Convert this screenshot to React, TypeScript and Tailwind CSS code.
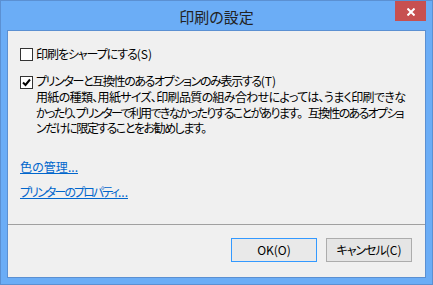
import React from 'react';

const Checkbox: React.FC<{ checked?: boolean }> = ({ checked }) => (
    <span className="w-[13px] h-[13px] shrink-0 border border-[#333333] bg-white flex items-center justify-center">
        {checked && (
            <svg width="9" height="9" viewBox="0 0 9 9">
                <path d="M1 4.5 L3.5 7 L8 1.5" fill="none" stroke="#000" strokeWidth="2" />
            </svg>
        )}
    </span>
);

// japanese is squeezed then spread to the width measured on the reference; latin keeps normal spacing
const just = 'inline-block whitespace-nowrap [text-align-last:justify]';
const fit = `${just} tracking-[-2px]`;
const Lat: React.FC<{ children: React.ReactNode }> = ({ children }) => (
    <span className="tracking-normal">{children}</span>
);

export default function App() {
    return (
        <div className="w-[433px] h-[285px] bg-[#6badf6] border border-[#5b90d2] flex flex-col px-[6px] pb-[6px] font-['Noto_Sans_CJK_JP',sans-serif] [font-feature-settings:'palt']">
            {/* title bar */}
            <div className="h-[29px] relative flex items-center justify-center">
                <span className="text-[15px] leading-[20px] text-[#222222] mt-[2px]">印刷の設定</span>
                <button className="absolute right-0 top-0 w-[31px] h-[20px] bg-[#c75050] flex items-center justify-center">
                    <svg width="8" height="8" viewBox="0 0 8 8" className="mt-[1px] ml-[1px]">
                        <path d="M0.5 0.5 L7.5 7.5 M7.5 0.5 L0.5 7.5" stroke="#fff" strokeWidth="2" />
                    </svg>
                </button>
            </div>

            {/* body */}
            <div className="flex-1 border border-[#5b90d2] bg-[#f0f0f0] flex flex-col text-[12px] text-black">
                <div className="flex items-start pl-[12px] mt-[15px]">
                    <span className="mt-[2px]"><Checkbox /></span>
                    <span className={`ml-[3px] leading-[16px] w-[116px] ${fit}`}>印刷をシャープにする<Lat>(S)</Lat></span>
                </div>

                <div className="flex items-start pl-[12px] mt-[11px]">
                    <span className="mt-[3px]"><Checkbox checked /></span>
                    <div className="ml-[3px] flex flex-col">
                        <span className={`leading-[16px] w-[240px] ${fit}`}>プリンターと互換性のあるオプションのみ表示する<Lat>(T)</Lat></span>
                        <span className={`leading-[15.5px] w-[368px] ${fit}`}>用紙の種類、用紙サイズ、印刷品質の組み合わせによっては、うまく印刷できな</span>
                        <span className={`leading-[15.5px] w-[366px] ${just} tracking-[-2.6px]`}>
                            かったり、プリンターで利用できなかったりすることがあります<span className="[font-feature-settings:normal]">。</span>互換性のあるオプショ
                        </span>
                        <span className={`leading-[15.5px] w-[169px] ${fit}`}>ンだけに限定することをお勧めします。</span>
                    </div>
                </div>

                <div className="pl-[12px] mt-[23px] leading-[16px]">
                    <a className={`text-[#0066cc] underline cursor-pointer w-[58px] ${fit}`}>色の管理<Lat>...</Lat></a>
                </div>
                <div className="pl-[12px] mt-[9px] leading-[16px]">
                    <a className={`text-[#0066cc] underline cursor-pointer w-[108px] ${fit}`}>プリンターのプロパティ<Lat>...</Lat></a>
                </div>

                <div className="mt-[24px] h-px bg-[#a0a0a0]" />

                <div className="flex justify-end gap-[9px] pr-[13px] mt-[13px]">
                    <button className="w-[86px] h-[24px] border border-[#3399ff] bg-[#e9e9e9] flex items-center justify-center leading-[16px]">
                        OK(O)
                    </button>
                    <button className="w-[86px] h-[24px] border border-[#acacac] bg-[#e5e5e5] flex items-center justify-center leading-[16px]">
                        <span className={`w-[65px] ${fit}`}>キャンセル<Lat>(C)</Lat></span>
                    </button>
                </div>
            </div>
        </div>
    );
}
